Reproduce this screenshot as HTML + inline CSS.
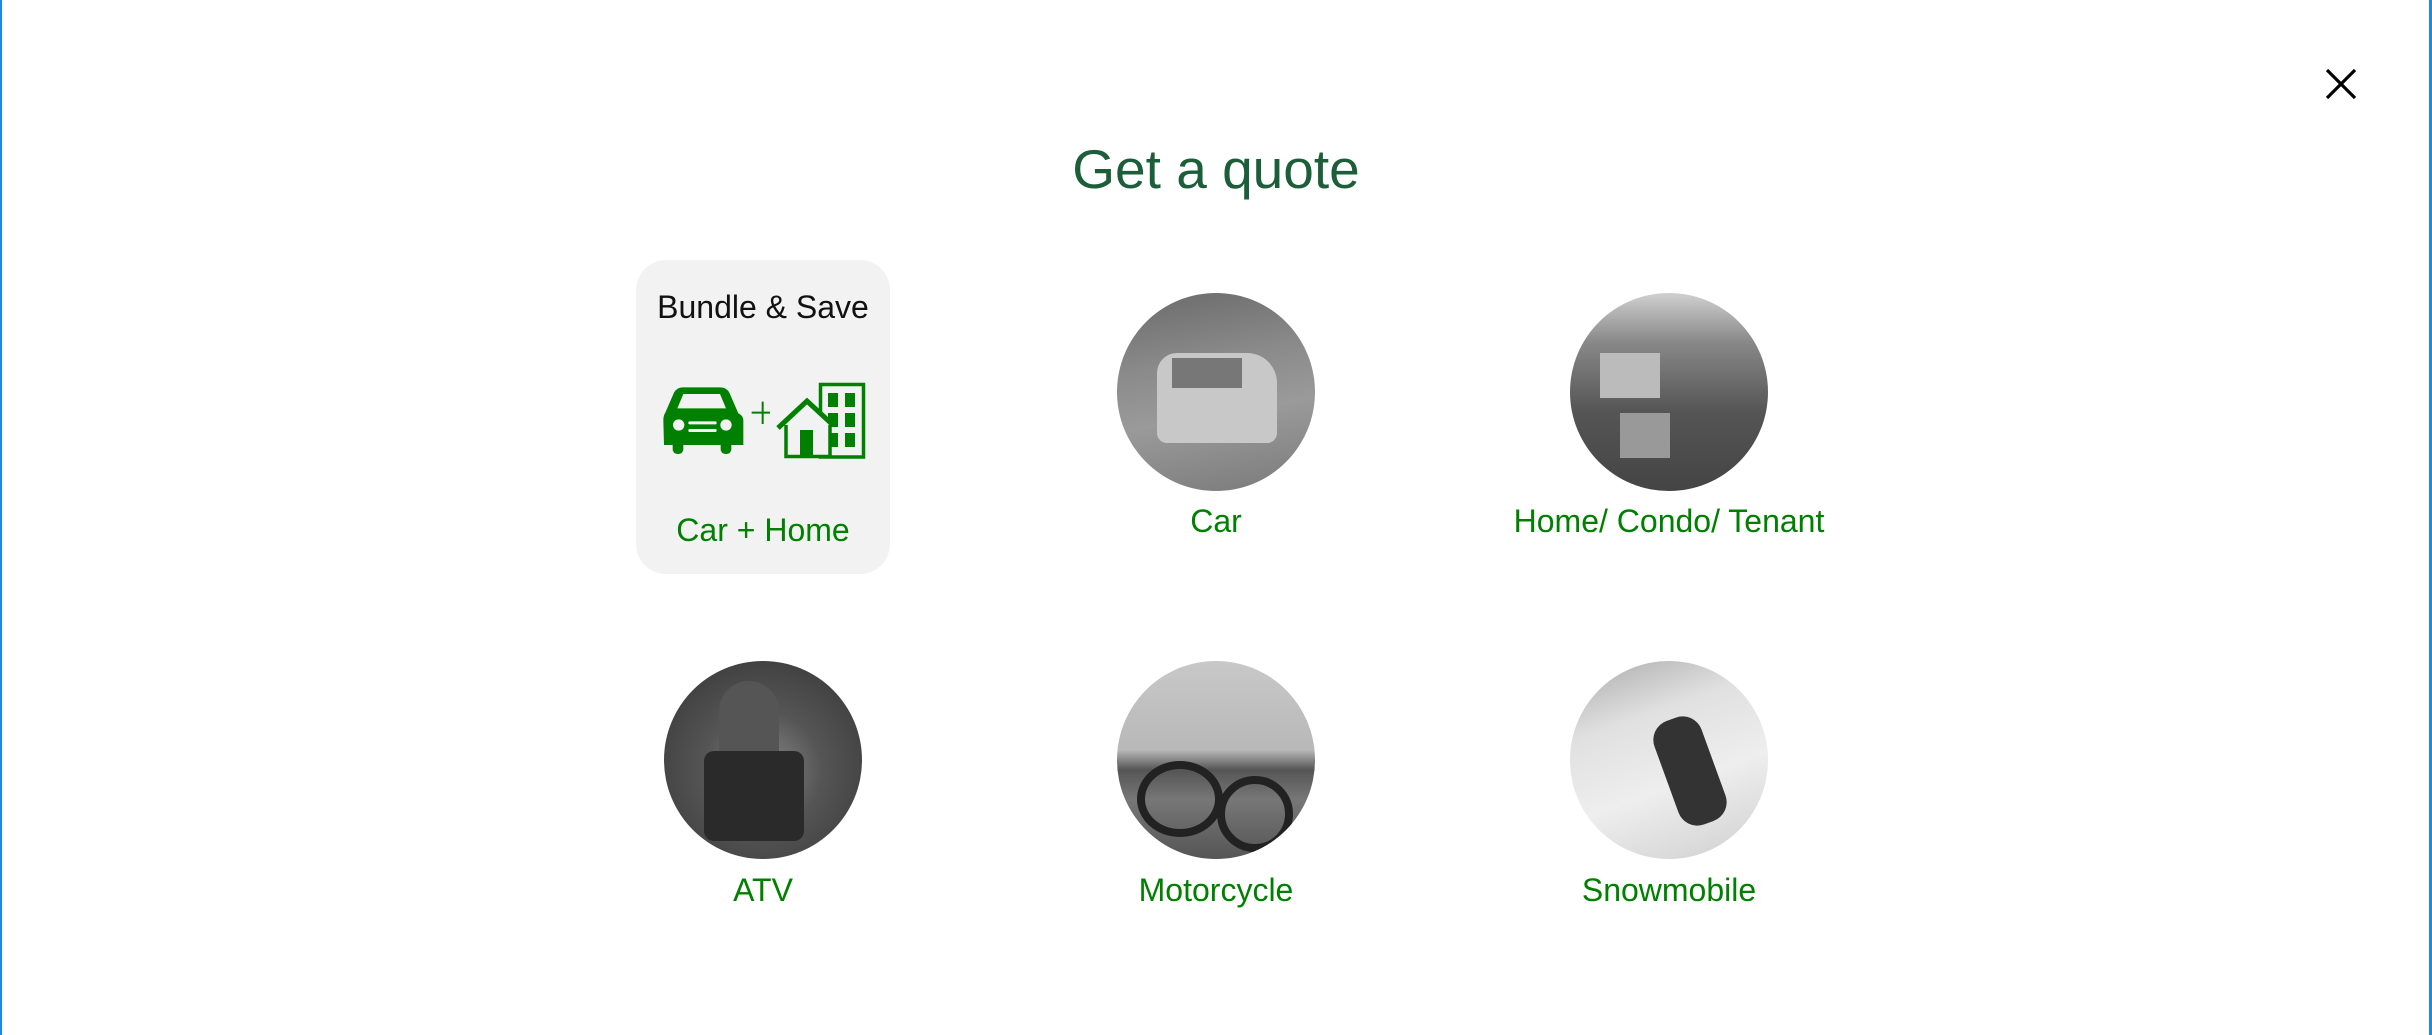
<!DOCTYPE html>
<html><head><meta charset="utf-8">
<style>
html,body{margin:0;padding:0;}
body{width:2432px;height:1035px;position:relative;background:#fff;overflow:hidden;font-family:"Liberation Sans",sans-serif;}
.bl{position:absolute;left:0;top:0;width:2px;height:1035px;background:#1e88e5;}
.br{position:absolute;left:2429px;top:0;width:3px;height:1035px;background:#1e88e5;}
h1{position:absolute;left:0;width:2432px;top:136px;margin:0;text-align:center;font-weight:normal;font-size:55px;color:#1d5e3a;line-height:66px;}
.card{position:absolute;left:636px;top:260px;width:254px;height:314px;background:#f2f2f2;border-radius:30px;}
.lbl{position:absolute;width:500px;text-align:center;font-size:32px;color:#008000;line-height:40px;}
.circ{position:absolute;width:198px;height:198px;border-radius:50%;overflow:hidden;}
</style></head><body>
<div class="bl"></div><div class="br"></div>
<svg style="position:absolute;left:2322px;top:65px" width="38" height="38" viewBox="0 0 38 38"><path d="M5 5L33 33M33 5L5 33" stroke="#000" stroke-width="3.2" fill="none"/></svg>
<h1>Get a quote</h1>
<div class="card"></div>
<div class="lbl" style="left:513px;top:287px;color:#111;">Bundle &amp; Save</div>
<svg style="position:absolute;left:650px;top:370px" width="120" height="100" viewBox="0 0 360 300">
<g fill="#008000">
<path d="M45,130 L72,68 Q80,52 98,52 L212,52 Q230,52 238,68 L265,130 Q280,136 280,152 L280,225 L42,225 L40,152 Q40,136 45,130 Z"/>
<rect x="68" y="210" width="32" height="42" rx="14"/>
<rect x="212" y="210" width="32" height="42" rx="14"/>
</g>
<path d="M82,115 L100,72 L210,72 L228,115 Z" fill="#f2f2f2"/>
<circle cx="86" cy="165" r="17" fill="#f2f2f2"/>
<circle cx="228" cy="165" r="17" fill="#f2f2f2"/>
<rect x="115" y="154" width="85" height="9" rx="4" fill="#f2f2f2"/>
<rect x="115" y="177" width="85" height="9" rx="4" fill="#f2f2f2"/>
<path d="M305,128H372M338,95V162" stroke="#008000" stroke-width="6"/>
</svg>
<svg style="position:absolute;left:770px;top:370px" width="110" height="100" viewBox="0 0 110 100">
<rect x="50.5" y="14.5" width="43" height="72.5" fill="none" stroke="#008000" stroke-width="3.5"/>
<g fill="#008000">
<rect x="58" y="23" width="10" height="14"/><rect x="75" y="23" width="10" height="14"/>
<rect x="58" y="43" width="10" height="14"/><rect x="75" y="43" width="10" height="14"/>
<rect x="58" y="63" width="10" height="14"/><rect x="75" y="63" width="10" height="14"/>
</g>
<path d="M16,55 V86.5 H60 V52 L37,33 Z" fill="#f2f2f2"/>
<path d="M16,55 V86.5 H60 V55" fill="none" stroke="#008000" stroke-width="3.5"/>
<path d="M8,58 L37,31 L63,55" fill="none" stroke="#008000" stroke-width="5"/>
<rect x="30" y="60" width="13" height="27" fill="#008000"/>
</svg>
<div class="lbl" style="left:513px;top:510px;">Car + Home</div>

<div class="circ" style="left:1117px;top:293px;background:linear-gradient(170deg,#6a6a6a 0%,#8a8a8a 35%,#9a9a9a 60%,#7a7a7a 100%);">
<div style="position:absolute;left:40px;top:60px;width:120px;height:90px;background:#c8c8c8;border-radius:20px 30px 10px 10px;"></div>
<div style="position:absolute;left:55px;top:65px;width:70px;height:30px;background:#777;"></div>
</div>
<div class="lbl" style="left:966px;top:501px;">Car</div>

<div class="circ" style="left:1570px;top:293px;background:linear-gradient(180deg,#d0d0d0 0%,#888 25%,#555 60%,#444 100%);">
<div style="position:absolute;left:30px;top:60px;width:60px;height:45px;background:#bbb;"></div>
<div style="position:absolute;left:50px;top:120px;width:50px;height:45px;background:#999;"></div>
</div>
<div class="lbl" style="left:1419px;top:501px;">Home/ Condo/ Tenant</div>

<div class="circ" style="left:664px;top:661px;background:radial-gradient(circle at 50% 55%,#888 0%,#555 40%,#333 100%);">
<div style="position:absolute;left:40px;top:90px;width:100px;height:90px;background:#2a2a2a;border-radius:10px;"></div>
<div style="position:absolute;left:55px;top:20px;width:60px;height:70px;background:#555;border-radius:30px 30px 0 0;"></div>
</div>
<div class="lbl" style="left:513px;top:870px;">ATV</div>

<div class="circ" style="left:1117px;top:661px;background:linear-gradient(180deg,#c8c8c8 0%,#b8b8b8 45%,#555 55%,#777 70%,#555 100%);">
<div style="position:absolute;left:20px;top:100px;width:70px;height:60px;border:8px solid #222;border-radius:50%;"></div>
<div style="position:absolute;left:100px;top:115px;width:60px;height:60px;border:8px solid #222;border-radius:50%;"></div>
</div>
<div class="lbl" style="left:966px;top:870px;">Motorcycle</div>

<div class="circ" style="left:1570px;top:661px;background:linear-gradient(160deg,#aaa 0%,#e0e0e0 30%,#eee 60%,#cfcfcf 100%);">
<div style="position:absolute;left:95px;top:55px;width:50px;height:110px;background:#333;border-radius:20px;transform:rotate(-20deg);"></div>
</div>
<div class="lbl" style="left:1419px;top:870px;">Snowmobile</div>
</body></html>
